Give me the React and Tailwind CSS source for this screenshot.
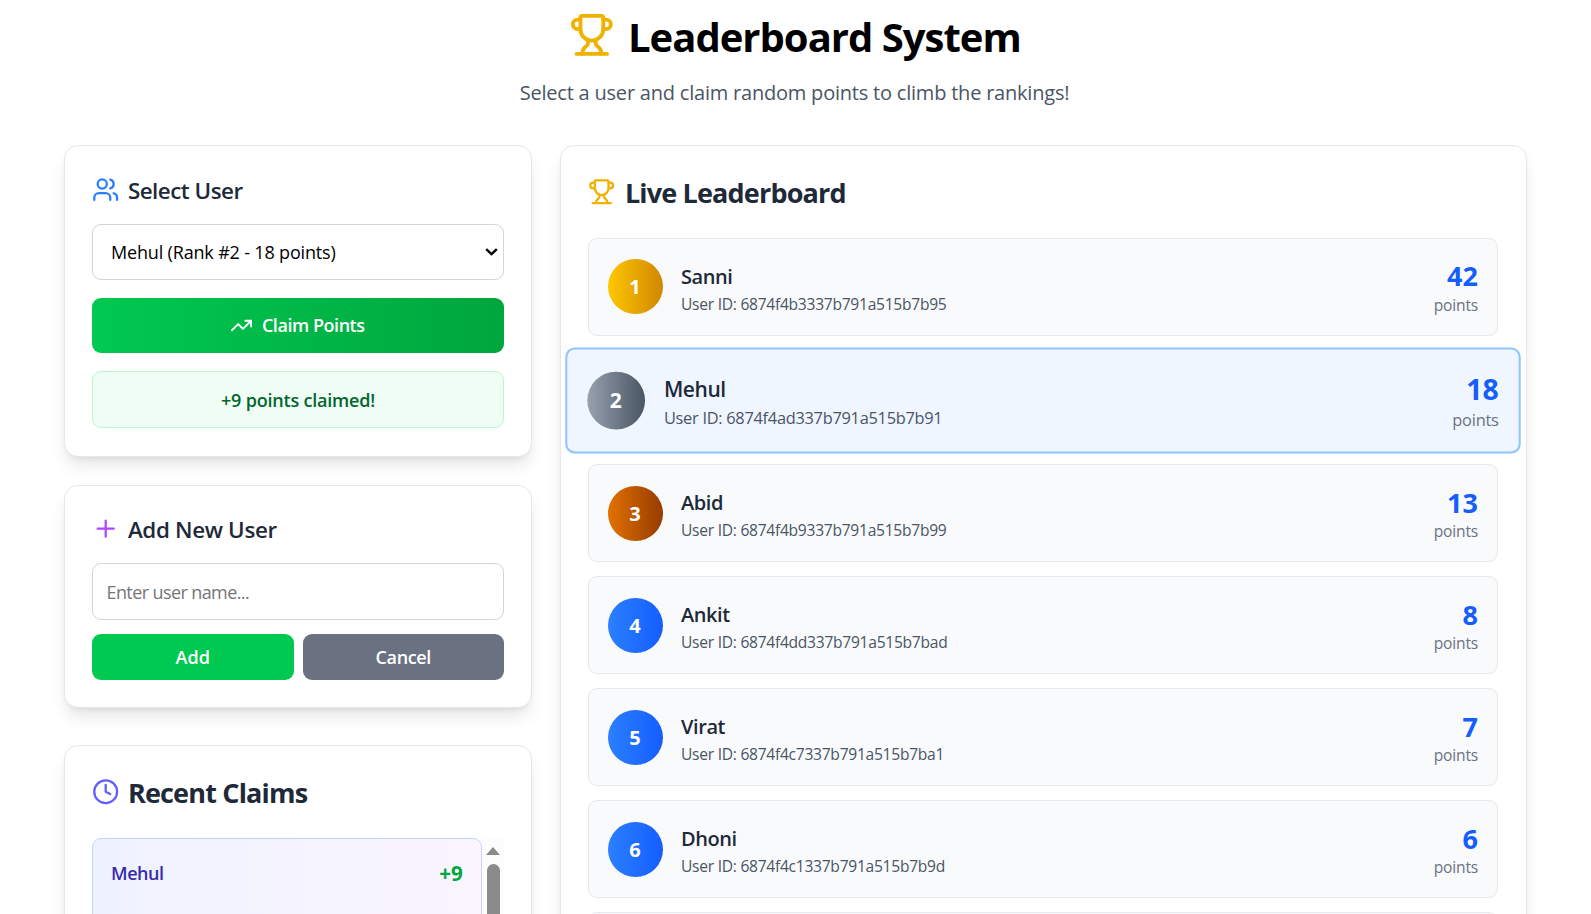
import { Clock, Plus, TrendingUp, Trophy, Users } from "lucide-react";

const players = [
  { rank: 1, name: "Sanni", id: "6874f4b3337b791a515b7b95", points: 42 },
  { rank: 2, name: "Mehul", id: "6874f4ad337b791a515b7b91", points: 18, selected: true },
  { rank: 3, name: "Abid", id: "6874f4b9337b791a515b7b99", points: 13 },
  { rank: 4, name: "Ankit", id: "6874f4dd337b791a515b7bad", points: 8 },
  { rank: 5, name: "Virat", id: "6874f4c7337b791a515b7ba1", points: 7 },
  { rank: 6, name: "Dhoni", id: "6874f4c1337b791a515b7b9d", points: 6 },
];

const badgeColors = {
  1: "from-yellow-400 to-yellow-600",
  2: "from-gray-400 to-gray-600",
  3: "from-amber-600 to-amber-800",
};

const card = "rounded-[14px] border border-gray-200 bg-white px-[27px] shadow-[0_11px_17px_-3px_rgb(0_0_0/0.1),0_4.5px_7px_-4.5px_rgb(0_0_0/0.1)]";

function PlayerRow({ player }) {
  const frame = player.selected
    ? "h-[100.5px] border-2 border-blue-300 bg-blue-50 scale-105"
    : "h-[98px] border border-gray-200 bg-gray-50";
  return (
    <div className={`flex shrink-0 items-center justify-between rounded-[9px] pr-[19px] pl-[18.5px] ${frame}`}>
      <div className="flex items-center gap-[18.5px]">
        <div
          className={`flex size-[55px] items-center justify-center rounded-full bg-gradient-to-r pt-px text-[20px] font-bold text-white ${
            badgeColors[player.rank] || "from-blue-500 to-blue-600"
          }`}
        >
          {player.rank}
        </div>
        <div className="pt-[2px]">
          <h3 className="text-[20px] leading-[32px] font-semibold tracking-[-0.42px] text-gray-800">{player.name}</h3>
          <p className="text-[15.6px] leading-[22px] tracking-[-0.27px] text-gray-600">User ID: {player.id}</p>
        </div>
      </div>
      <div className="text-right">
        <div className="text-[27px] leading-[36.5px] font-bold text-blue-600">{player.points}</div>
        <div className="text-[15.6px] leading-[20px] tracking-[-0.2px] text-gray-500">points</div>
      </div>
    </div>
  );
}

function SelectUserCard() {
  return (
    <section className={`${card} h-[312px] pt-[29px]`}>
      <div className="flex h-[31px] items-center gap-[8.5px]">
        <Users className="mb-[2px] size-[27.4px] text-blue-500" />
        <h2 className="text-[22.4px] font-semibold tracking-[-0.5px] text-gray-800">Select User</h2>
      </div>
      <button className="mt-[18px] flex h-[56px] w-full items-center justify-between rounded-[9px] border border-gray-300 pr-[5px] pl-[18px] text-[18px] tracking-[-0.17px] text-black">
        Mehul (Rank #2 - 18 points)
        <svg className="h-[8px] w-[13px]" viewBox="0 0 13 8" fill="none" stroke="currentColor" strokeWidth="2.4">
          <path d="M1.2 1.2 6.5 6.2 11.8 1.2" />
        </svg>
      </button>
      <button className="mt-[18px] flex h-[55px] w-full items-center justify-center gap-[9px] rounded-[9px] bg-gradient-to-r from-green-500 to-green-600 pr-[1.5px] text-[18px] font-semibold tracking-[-0.45px] text-white">
        <TrendingUp className="size-[23px]" />
        Claim Points
      </button>
      <div className="mt-[18px] flex h-[57px] items-center justify-center rounded-[9px] border border-green-200 bg-green-50 pt-[1.5px] text-[18px] font-semibold tracking-[-0.2px] text-green-800">
        +9 points claimed!
      </div>
    </section>
  );
}

function AddUserCard() {
  return (
    <section className={`${card} mt-[27.5px] h-[223.5px] pt-[28px]`}>
      <div className="flex h-[31px] items-center gap-[8.5px]">
        <Plus className="size-[27.4px] text-purple-500" />
        <h2 className="pt-[2px] text-[22.4px] font-semibold tracking-[-0.35px] text-gray-800">Add New User</h2>
      </div>
      <input
        placeholder="Enter user name..."
        className="mt-[18px] block h-[57px] w-full rounded-[9px] border border-gray-300 px-[13.5px] pt-[2px] text-[18px] tracking-[-0.6px] placeholder:text-[#757575]"
      />
      <div className="mt-[14.5px] flex gap-[9px] text-[18px] font-semibold text-white">
        <button className="h-[46px] flex-1 rounded-[9px] bg-green-500">Add</button>
        <button className="h-[46px] flex-1 rounded-[9px] bg-gray-500 tracking-[-0.36px]">Cancel</button>
      </div>
    </section>
  );
}

function RecentClaimsCard() {
  return (
    <section className={`${card} mt-[37px] h-[420px] pt-[28px]`}>
      <div className="flex h-[37px] items-center gap-[8.5px]">
        <Clock className="mb-px size-[27.4px] text-indigo-500" />
        <h2 className="pt-[2px] text-[27px] font-bold tracking-[-0.82px] text-gray-800">Recent Claims</h2>
      </div>
      <div className="mt-[27px] flex h-[300px]">
        <div className="flex h-[100px] flex-1 items-start justify-between rounded-[9px] border border-indigo-200 bg-gradient-to-r from-indigo-50 to-purple-50 px-[18px] pt-[18px]">
          <span className="text-[18px] leading-[32px] font-semibold tracking-[-0.45px] text-indigo-800">Mehul</span>
          <span className="text-[20.6px] leading-[33px] font-bold tracking-[0.1px] text-green-600">+9</span>
        </div>
        <div className="flex w-[22px] flex-col items-center bg-[#fcfcfc] pt-[9px]">
          <svg className="h-[8px] w-[14px]" viewBox="0 0 14 8">
            <path d="M7 0 14 8H0z" fill="#8b8b8b" />
          </svg>
          <div className="mt-[9px] h-[150px] w-[13px] rounded-full bg-[#8b8b8b]" />
        </div>
      </div>
    </section>
  );
}

export default function App() {
  return (
    <div className="h-[914px] overflow-hidden bg-white font-['Open_Sans',sans-serif]">
      <div className="mx-auto w-[1463px]">
        <header className="flex h-[145px] flex-col items-center pt-[12px]">
          <div className="flex h-[46px] items-center gap-[13.5px] pr-[1.5px]">
            <Trophy className="size-[45.7px] text-yellow-500" />
            <h1 className="pt-[3px] text-[40px] leading-[46px] font-bold tracking-[-0.99px] text-black">Leaderboard System</h1>
          </div>
          <p className="mt-[19px] pr-[2px] text-[20px] leading-[32px] tracking-[-0.21px] text-gray-600">
            Select a user and claim random points to climb the rankings!
          </p>
        </header>
        <main className="flex gap-[28px]">
          <div className="w-[468px] shrink-0">
            <SelectUserCard />
            <AddUserCard />
            <RecentClaimsCard />
          </div>
          <section className={`${card} h-[1000px] flex-1 pt-[28px]`}>
            <div className="flex h-[37px] items-center gap-[9.5px]">
              <Trophy className="mb-px size-[27.4px] text-yellow-500" />
              <h2 className="pt-[2px] text-[27px] font-bold tracking-[-0.83px] text-gray-800">Live Leaderboard</h2>
            </div>
            <div className="mt-[26.5px] mr-px flex flex-col gap-[14px]">
              {players.map((p) => (
                <PlayerRow key={p.rank} player={p} />
              ))}
              <div className="h-[98px] rounded-[9px] border border-gray-200 bg-gray-50" />
            </div>
          </section>
        </main>
      </div>
    </div>
  );
}
